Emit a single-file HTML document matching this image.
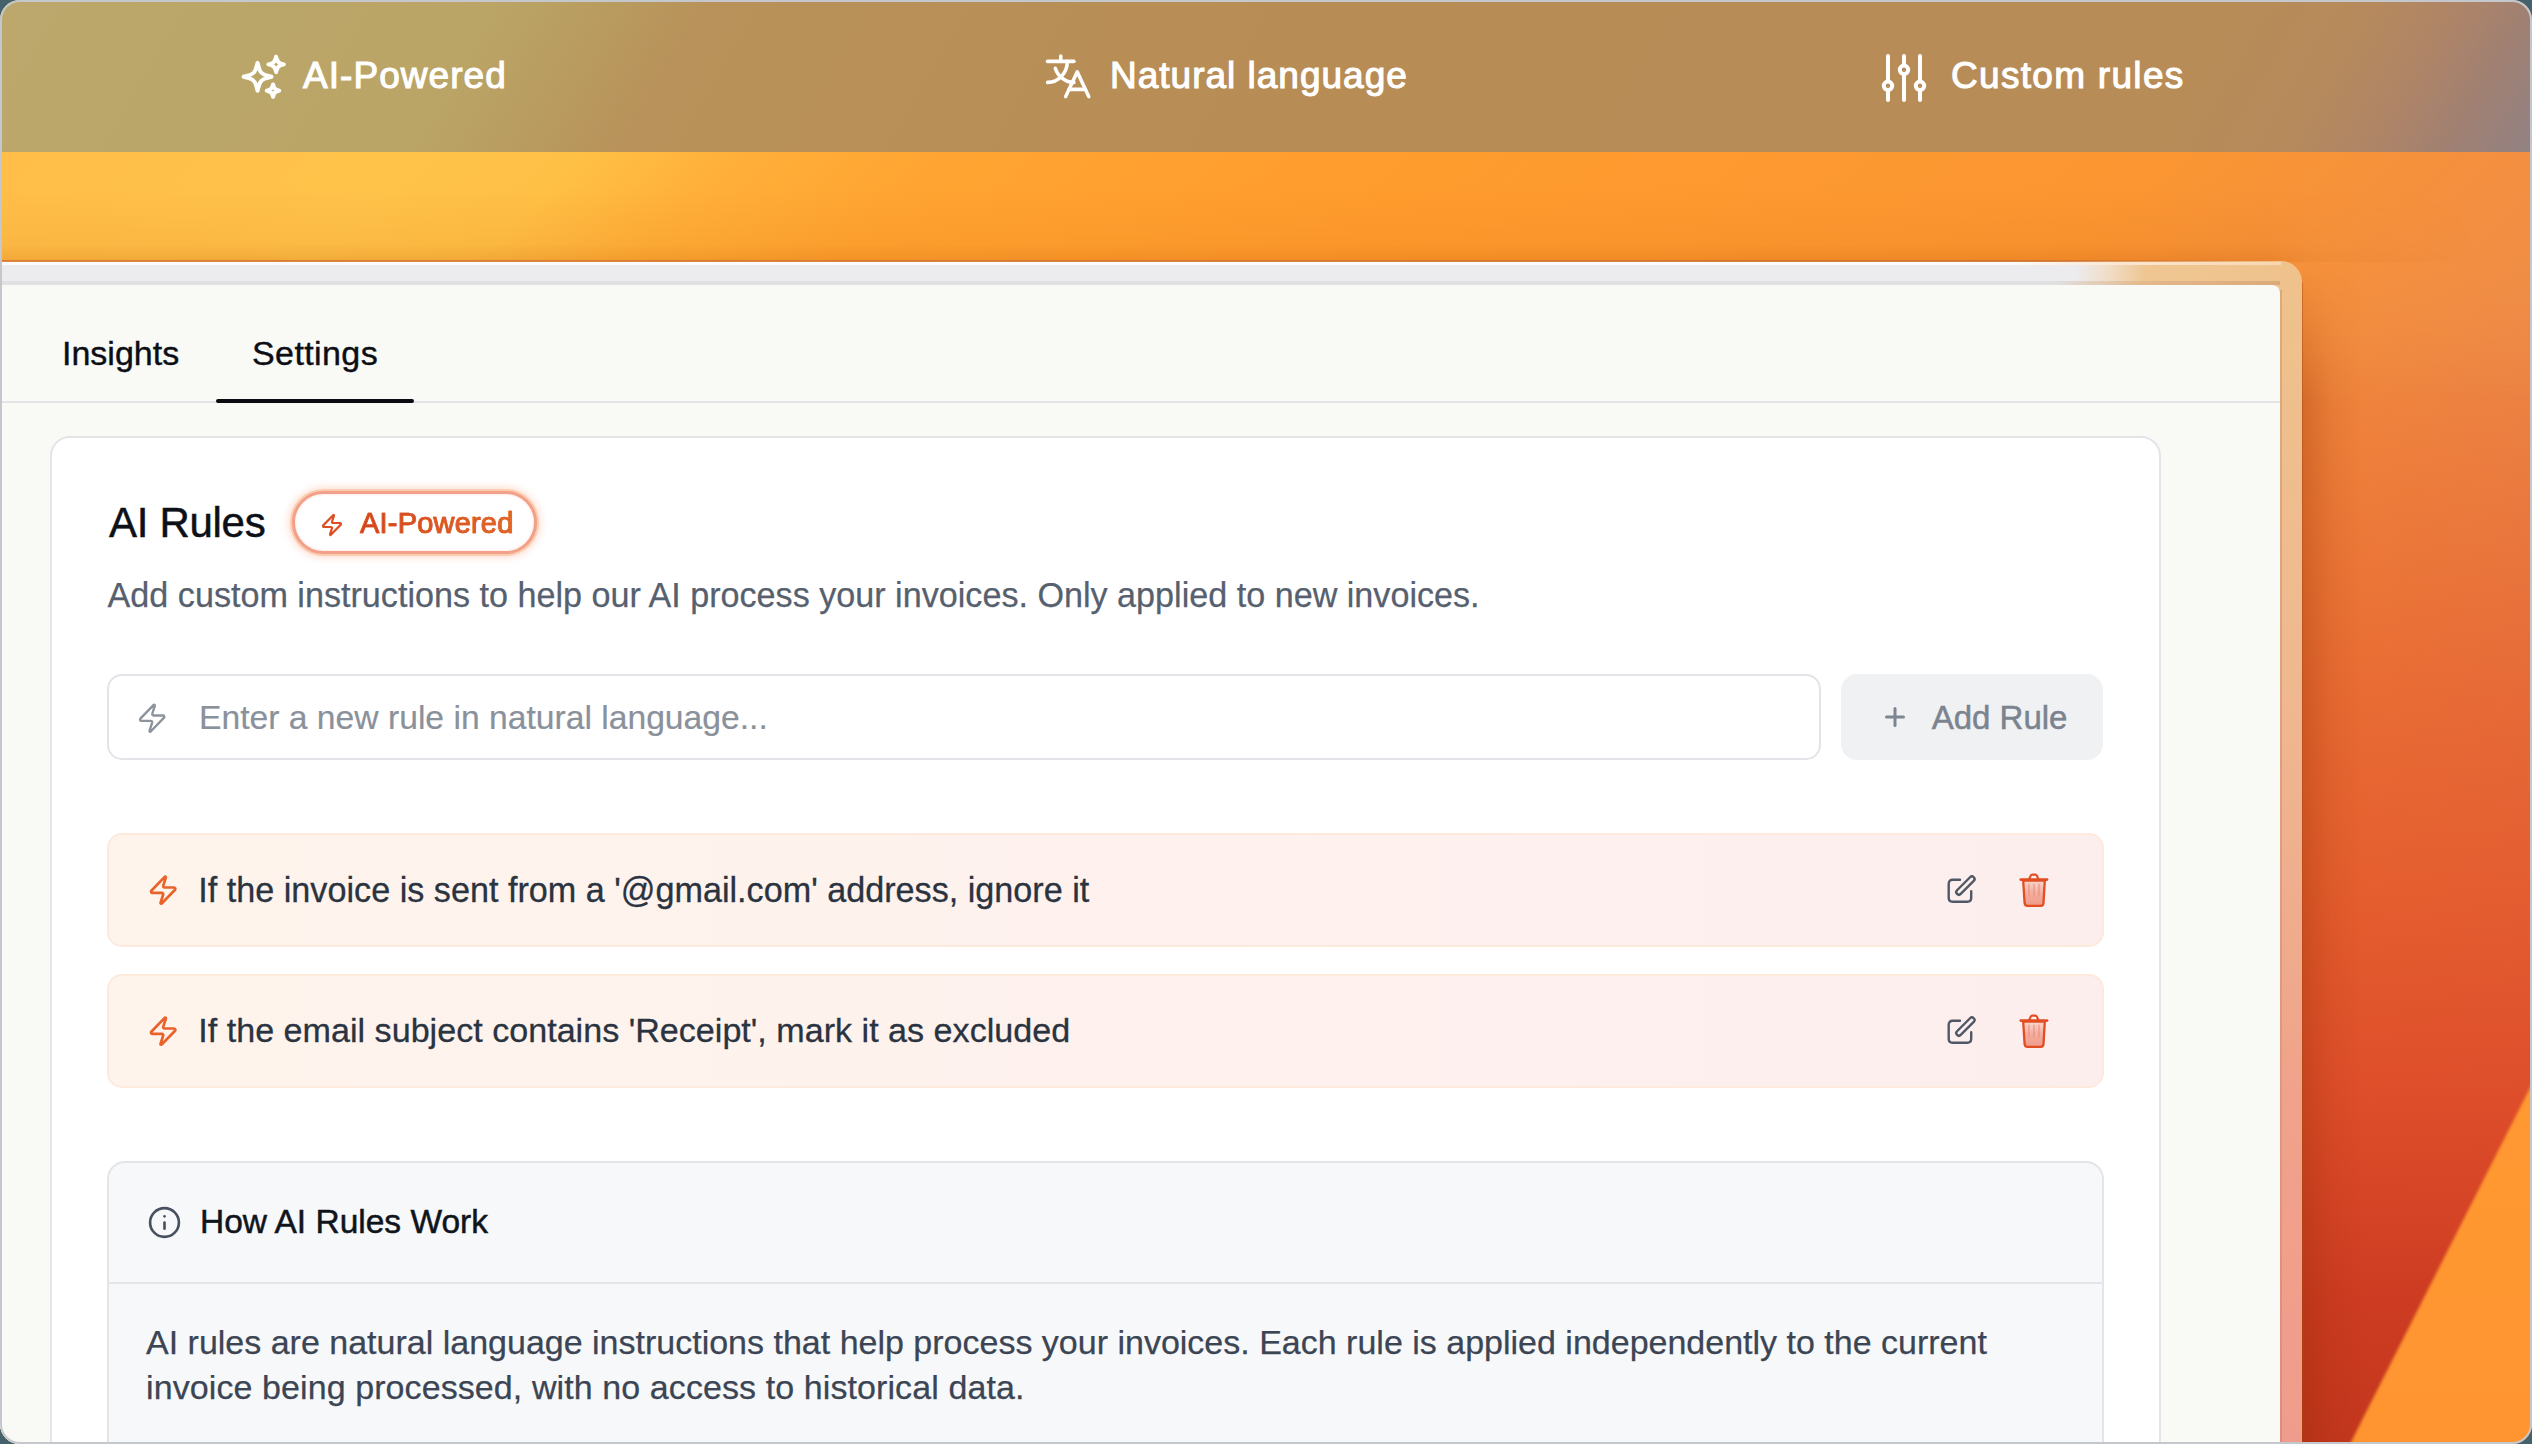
<!DOCTYPE html>
<html>
<head>
<meta charset="utf-8">
<style>
html,body{margin:0;padding:0;width:2532px;height:1444px;overflow:hidden;background:#44626c;}
*{box-sizing:border-box;}
body{font-family:"Liberation Sans",sans-serif;}
.frame{position:absolute;left:0;top:0;width:2532px;height:1444px;}
.inner{position:absolute;left:0;top:0;width:2532px;height:1444px;border-radius:20px;overflow:hidden;background:#f08a3a;}
.bord{position:absolute;left:0;top:0;width:2532px;height:1444px;border-radius:20px;border:2px solid #c4c8cc;pointer-events:none;}
.abs{position:absolute;}
.t{position:absolute;white-space:nowrap;line-height:1;}
svg{position:absolute;overflow:visible;}
</style>
</head>
<body>
<div class="frame">
<div class="inner">
  <!-- orange background -->
  <div class="abs" id="obg" style="left:0;top:152px;width:2532px;height:1292px;background:linear-gradient(180deg,rgba(222,70,38,0) 0px,rgba(222,70,38,0) 110px,rgba(222,70,38,0.27) 348px,rgba(222,70,38,0.49) 548px,rgba(222,70,38,0.68) 748px,rgba(220,72,40,0.92) 948px,rgba(205,60,34,1) 1148px,rgba(195,55,30,1) 1292px),linear-gradient(90deg,#ffc048 0%,#ffc44a 12%,#ffb03a 25%,#ffa032 40%,#ff9a2e 55%,#fa9532 78%,#f4903e 91%,#ee8c48 100%);"></div>
  <div class="abs" id="band" style="left:0;top:152px;width:2532px;height:250px;-webkit-mask-image:linear-gradient(180deg,#000 110px,rgba(0,0,0,0) 250px);background:linear-gradient(135deg,#ffbe48 0%,#ffc34a 15%,#ffc046 21%,#ffb03a 26.5%,#ffa432 34%,#ff9c2e 52%,#fb9632 78%,#f4903e 89.1%,#ee8c48 98%);"></div>
  <div class="abs" style="left:0;top:190px;width:2532px;height:72px;-webkit-mask-image:linear-gradient(90deg,#000 2270px,rgba(0,0,0,0.4) 2310px,rgba(0,0,0,0) 2480px);background:linear-gradient(180deg,rgba(200,90,0,0) 0%,rgba(200,90,0,0.08) 75%,rgba(190,80,0,0.22) 100%);"></div>
  <div class="abs" style="left:2290px;top:152px;width:300px;height:1348px;filter:blur(1.5px);"><div style="position:absolute;left:0;top:0;width:300px;height:1348px;background:linear-gradient(180deg,#ffa434,#ff9a32 60%,#ff9430);clip-path:polygon(300px 817px,300px 1348px,31.7px 1348px);"></div></div>
  <div class="abs" style="left:2302px;top:262px;width:60px;height:1190px;background:linear-gradient(90deg,rgba(140,40,0,0.28),rgba(140,40,0,0.08) 50%,rgba(140,40,0,0));-webkit-mask-image:linear-gradient(180deg,rgba(0,0,0,0),#000 140px);"></div>
  <!-- header band -->
  <div class="abs" id="hdr" style="left:0;top:0;width:2532px;height:152px;background:linear-gradient(120deg,#bca86c 0%,#baa466 19%,#b99c60 23%,#b8925a 27%,#b88c55 51%,#b88c57 85.6%,#b68a5c 90.6%,#ae8468 94.1%,#a08072 96.7%,#928284 100%);"></div>
  <!-- header content -->
  <svg style="left:239.4px;top:51.7px;width:49.5px;height:49.5px" viewBox="0 0 24 24" fill="none" stroke="#fff" stroke-width="1.95" stroke-linecap="round" stroke-linejoin="round"><path d="M9.813 15.904 9 18.75l-.813-2.846a4.5 4.5 0 0 0-3.09-3.09L2.250 12l2.846-.813a4.5 4.5 0 0 0 3.090-3.090L9 5.25l.813 2.846a4.5 4.5 0 0 0 3.090 3.090L15.75 12l-2.846.813a4.5 4.5 0 0 0-3.090 3.090ZM18.259 8.715 18 9.75l-.259-1.035a3.375 3.375 0 0 0-2.455-2.456L14.25 6l1.036-.259a3.375 3.375 0 0 0 2.455-2.456L18 2.25l.259 1.035a3.375 3.375 0 0 0 2.456 2.456L21.75 6l-1.035.259a3.375 3.375 0 0 0-2.456 2.456ZM16.894 20.567 16.5 21.75l-.394-1.183a2.250 2.250 0 0 0-1.423-1.423L13.5 18.75l1.183-.394a2.250 2.250 0 0 0 1.423-1.423l.394-1.183.394 1.183a2.250 2.250 0 0 0 1.423 1.423l1.183.394-1.183.394a2.250 2.250 0 0 0-1.423 1.423Z"/></svg>
  <div class="t hdrt" style="left:303px;top:56.7px;letter-spacing:1.05px;">AI-Powered</div>
  <svg style="left:1041.3px;top:49px;width:52.7px;height:56.3px" viewBox="0 0 256 256" preserveAspectRatio="none" fill="none" stroke="#fff" stroke-width="17" stroke-linecap="round" stroke-linejoin="round"><polyline points="232 216 176 104 120 216"/><line x1="136" y1="184" x2="216" y2="184"/><line x1="96" y1="32" x2="96" y2="56"/><line x1="32" y1="56" x2="160" y2="56"/><path d="M128,56a96,96,0,0,1-96,96"/><path d="M69.47,88A96,96,0,0,0,160,152"/></svg>
  <div class="t hdrt" style="left:1110px;top:56.7px;letter-spacing:1.0px;">Natural language</div>
  <svg style="left:1872px;top:47px;width:64px;height:64px" viewBox="0 0 64 64" fill="none" stroke="#fff" stroke-width="4" stroke-linecap="round"><line x1="16" y1="9" x2="16" y2="34"/><line x1="16" y1="45" x2="16" y2="53"/><circle cx="16" cy="38.8" r="4.2"/><line x1="32" y1="9" x2="32" y2="18"/><line x1="32" y1="29" x2="32" y2="53"/><circle cx="32" cy="22.8" r="4.2"/><line x1="48" y1="9" x2="48" y2="34"/><line x1="48" y1="45" x2="48" y2="53"/><circle cx="48" cy="38.8" r="4.2"/></svg>
  <div class="t hdrt" style="left:1951px;top:56.7px;letter-spacing:1.3px;">Custom rules</div>

  <!-- window frame -->
  <div class="abs" id="wframe" style="left:-40px;top:261px;width:2342px;height:1300px;border-radius:0 21px 0 0;background:linear-gradient(90deg,#ececee 0%,#ececee 90.3%,#f1dcc6 91.8%,#efc692 93.3%,#efc28c 100%);"></div>
  <div class="abs" style="left:0;top:260px;width:2282px;height:2px;background:linear-gradient(90deg,#d8782c,#d07028 90%,rgba(208,112,40,0));opacity:.85"></div>
  <div class="abs" style="left:0;top:262px;width:2281px;height:3px;background:linear-gradient(90deg,#fbfbfb 0%,#fbfbfb 88%,#fde6d0 93%,#f8d6b0 100%);"></div>
  <div class="abs" style="left:0;top:281px;width:2280px;height:4px;background:linear-gradient(90deg,#e1e1e4 0%,#e1e1e4 90%,#e3b88a 94%,#dcaa7a 100%);"></div>
  <div class="abs" style="left:2279px;top:300px;width:23px;height:1150px;background:linear-gradient(180deg,#eec28c 0%,#efb890 35%,#f0a28a 70%,#f09c8c 100%);"></div>
  <div class="abs" style="left:2279px;top:290px;width:3px;height:1160px;background:linear-gradient(180deg,#dcaa7a 0%,#dc9a80 60%,#dc8c80 100%);"></div>
  <div class="abs" style="left:2302px;top:282px;width:1px;height:1170px;background:rgba(170,70,20,0.45);"></div>
  <!-- window content -->
  <div class="abs" id="win" style="left:0;top:285px;width:2280px;height:1200px;background:#f9f9f6;border-radius:0 8px 0 0;"></div>

  <!-- tabs -->
  <div class="t tab" style="left:62px;top:336.4px;">Insights</div>
  <div class="t tab" style="left:252px;top:336.4px;letter-spacing:0.4px;">Settings</div>
  <div class="abs" style="left:0;top:401px;width:2280px;height:2px;background:#e3e4e7;"></div>
  <div class="abs" style="left:216px;top:399px;width:198px;height:4px;background:#0a0a10;border-radius:2px;"></div>

  <!-- card -->
  <div class="abs" id="card" style="left:50px;top:436px;width:2111px;height:1100px;background:#fff;border:2px solid #e4e5e9;border-radius:20px;"></div>

  <div class="t" id="title" style="left:109px;top:502.3px;font-size:42px;color:#0d1117;-webkit-text-stroke:0.5px #0d1117;letter-spacing:-0.3px;">AI Rules</div>
  <!-- badge -->
  <div class="abs" id="badge" style="left:292px;top:491px;width:245px;height:63px;border-radius:32px;border:3px solid #f2a08a;background:#fff;box-shadow:0 0 0 2px rgba(250,196,160,0.75),0 0 7px 4px rgba(248,150,110,0.3),inset 0 0 3px rgba(248,140,100,0.3);"></div>
  <svg style="left:320px;top:513px;width:24px;height:24px" viewBox="0 0 24 24" fill="none" stroke="#dd4f22" stroke-width="2.2" stroke-linecap="round" stroke-linejoin="round"><path d="M4 14a1 1 0 0 1-.78-1.63l9.9-10.2a.5.5 0 0 1 .86.46l-1.92 6.02A1 1 0 0 0 13 10h7a1 1 0 0 1 .78 1.63l-9.9 10.2a.5.5 0 0 1-.86-.46l1.92-6.02A1 1 0 0 0 11 14z"/></svg>
  <div class="t" id="badgetxt" style="left:360px;top:508.6px;font-size:29px;letter-spacing:0.2px;-webkit-text-stroke:0.7px #dd5a24;background:linear-gradient(90deg,#d23e1e,#e46a26);-webkit-background-clip:text;background-clip:text;color:transparent;">AI-Powered</div>

  <div class="t" id="desc" style="left:107.6px;top:578.2px;font-size:34.15px;color:#56606e;-webkit-text-stroke:0.25px #56606e;">Add custom instructions to help our AI process your invoices. Only applied to new invoices.</div>

  <!-- input -->
  <div class="abs" id="input" style="left:107px;top:674px;width:1714px;height:86px;border:2px solid #e2e4e8;border-radius:15px;background:#fff;"></div>
  <svg style="left:136.3px;top:701.6px;width:32.4px;height:32.4px" viewBox="0 0 24 24" fill="none" stroke="#8d939c" stroke-width="1.75" stroke-linecap="round" stroke-linejoin="round"><path d="M4 14a1 1 0 0 1-.78-1.63l9.9-10.2a.5.5 0 0 1 .86.46l-1.92 6.02A1 1 0 0 0 13 10h7a1 1 0 0 1 .78 1.63l-9.9 10.2a.5.5 0 0 1-.86-.46l1.92-6.02A1 1 0 0 0 11 14z"/></svg>
  <div class="t" id="ph" style="left:199px;top:700.7px;font-size:33.66px;color:#8a919b;-webkit-text-stroke:0.2px #8a919b;">Enter a new rule in natural language...</div>
  <!-- button -->
  <div class="abs" id="btn" style="left:1841px;top:674px;width:262px;height:86px;border-radius:16px;background:#f0f1f3;"></div>
  <svg style="left:1883px;top:705px;width:24px;height:24px" viewBox="0 0 24 24" fill="none" stroke="#7d8591" stroke-width="3" stroke-linecap="round"><line x1="12" y1="3.5" x2="12" y2="20.5"/><line x1="3.5" y1="12" x2="20.5" y2="12"/></svg>
  <div class="t" id="btntxt" style="left:1931.7px;top:700.8px;font-size:33px;color:#7b838f;-webkit-text-stroke:0.5px #7b838f;">Add Rule</div>

  <!-- rules -->
  <div class="abs rule" style="top:833px;"></div>
  <svg style="left:147.3px;top:873.6px;width:32.4px;height:32.4px" viewBox="0 0 24 24" fill="none" stroke="#e8622a" stroke-width="2" stroke-linecap="round" stroke-linejoin="round"><path d="M4 14a1 1 0 0 1-.78-1.63l9.9-10.2a.5.5 0 0 1 .86.46l-1.92 6.02A1 1 0 0 0 13 10h7a1 1 0 0 1 .78 1.63l-9.9 10.2a.5.5 0 0 1-.86-.46l1.92-6.02A1 1 0 0 0 11 14z"/></svg>
  <div class="t rtxt" style="top:872.7px;font-size:34.18px;">If the invoice is sent from a '@gmail.com' address, ignore it</div>
  <svg style="left:1940px;top:865px;width:50px;height:50px" viewBox="0 0 50 50" fill="none" stroke="#4f5866" stroke-width="2.4" stroke-linecap="round" stroke-linejoin="round"><path d="M20 14.8 H12.7 Q8.7 14.8 8.7 18.8 V32.7 Q8.7 36.7 12.7 36.7 H27.2 Q31.2 36.7 31.2 32.7 V26.2"/><rect x="13.6" y="18" width="23.6" height="5.2" rx="2.6" transform="rotate(-45 25.4 20.6)"/></svg>
  <svg style="left:2010px;top:865px;width:50px;height:50px" viewBox="0 0 50 50" fill="none" stroke-linecap="round" stroke-linejoin="round"><defs><linearGradient id="tg865" x1="0" y1="0" x2="0" y2="1"><stop offset="0" stop-color="#fbd8cf"/><stop offset="0.45" stop-color="#f4b0a2"/><stop offset="1" stop-color="#f09a88"/></linearGradient></defs><path d="M13.2 15.5 L14.6 38.2 Q14.9 40.8 17.4 40.8 L30.8 40.8 Q33.3 40.8 33.5 38.2 L34.8 15.5 Z" fill="url(#tg865)" stroke="#e24d22" stroke-width="2.3"/><line x1="19" y1="19" x2="19" y2="31" stroke="#e8907e" stroke-width="1.1"/><line x1="24" y1="19" x2="24" y2="31" stroke="#e8907e" stroke-width="1.1"/><line x1="29" y1="19" x2="29" y2="31" stroke="#e8907e" stroke-width="1.1"/><line x1="10.8" y1="14.6" x2="37" y2="14.6" stroke="#e24d22" stroke-width="2.8"/><path d="M19.2 14 L20.7 10.6 Q21.2 9.6 22.3 9.6 L25.3 9.6 Q26.4 9.6 26.9 10.6 L28.4 14" stroke="#e24d22" stroke-width="2.1"/></svg>

  <div class="abs rule" style="top:974px;"></div>
  <svg style="left:147.3px;top:1014.6px;width:32.4px;height:32.4px" viewBox="0 0 24 24" fill="none" stroke="#e8622a" stroke-width="2" stroke-linecap="round" stroke-linejoin="round"><path d="M4 14a1 1 0 0 1-.78-1.63l9.9-10.2a.5.5 0 0 1 .86.46l-1.92 6.02A1 1 0 0 0 13 10h7a1 1 0 0 1 .78 1.63l-9.9 10.2a.5.5 0 0 1-.86-.46l1.92-6.02A1 1 0 0 0 11 14z"/></svg>
  <div class="t rtxt" style="top:1013.2px;font-size:34.12px;">If the email subject contains 'Receipt', mark it as excluded</div>
  <svg style="left:1940px;top:1006px;width:50px;height:50px" viewBox="0 0 50 50" fill="none" stroke="#4f5866" stroke-width="2.4" stroke-linecap="round" stroke-linejoin="round"><path d="M20 14.8 H12.7 Q8.7 14.8 8.7 18.8 V32.7 Q8.7 36.7 12.7 36.7 H27.2 Q31.2 36.7 31.2 32.7 V26.2"/><rect x="13.6" y="18" width="23.6" height="5.2" rx="2.6" transform="rotate(-45 25.4 20.6)"/></svg>
  <svg style="left:2010px;top:1006px;width:50px;height:50px" viewBox="0 0 50 50" fill="none" stroke-linecap="round" stroke-linejoin="round"><defs><linearGradient id="tg1006" x1="0" y1="0" x2="0" y2="1"><stop offset="0" stop-color="#fbd8cf"/><stop offset="0.45" stop-color="#f4b0a2"/><stop offset="1" stop-color="#f09a88"/></linearGradient></defs><path d="M13.2 15.5 L14.6 38.2 Q14.9 40.8 17.4 40.8 L30.8 40.8 Q33.3 40.8 33.5 38.2 L34.8 15.5 Z" fill="url(#tg1006)" stroke="#e24d22" stroke-width="2.3"/><line x1="19" y1="19" x2="19" y2="31" stroke="#e8907e" stroke-width="1.1"/><line x1="24" y1="19" x2="24" y2="31" stroke="#e8907e" stroke-width="1.1"/><line x1="29" y1="19" x2="29" y2="31" stroke="#e8907e" stroke-width="1.1"/><line x1="10.8" y1="14.6" x2="37" y2="14.6" stroke="#e24d22" stroke-width="2.8"/><path d="M19.2 14 L20.7 10.6 Q21.2 9.6 22.3 9.6 L25.3 9.6 Q26.4 9.6 26.9 10.6 L28.4 14" stroke="#e24d22" stroke-width="2.1"/></svg>

  <!-- how box -->
  <div class="abs" id="how" style="left:107px;top:1161px;width:1997px;height:400px;background:#f7f8fa;border:2px solid #e3e5e9;border-radius:18px;"></div>
  <div class="abs" style="left:109px;top:1282px;width:1993px;height:2px;background:#e3e5e9;"></div>
  <svg style="left:146px;top:1204px;width:37px;height:37px" viewBox="0 0 24 24" fill="none" stroke="#485060" stroke-width="1.7" stroke-linecap="round" stroke-linejoin="round"><circle cx="12" cy="12" r="9.35"/><path d="M12 16v-4"/><path d="M12 8h.01"/></svg>
  <div class="t" id="howt" style="left:200px;top:1205.4px;font-size:33.5px;color:#10151c;-webkit-text-stroke:0.5px #10151c;">How AI Rules Work</div>
  <div class="t bodyt" style="left:146px;top:1324.8px;">AI rules are natural language instructions that help process your invoices. Each rule is applied independently to the current</div>
  <div class="t bodyt" style="left:146px;top:1369.8px;letter-spacing:0.09px;">invoice being processed, with no access to historical data.</div>
</div>
<div class="bord"></div>
</div>
<style>
.hdrt{font-size:37px;letter-spacing:0.85px;color:#fff;-webkit-text-stroke:1.1px #fff;}
.tab{font-size:34px;color:#0b0e14;-webkit-text-stroke:0.4px #0b0e14;}
.rule{left:107px;width:1997px;height:114px;border-radius:15px;border:2px solid #fdeadc;background:linear-gradient(90deg,#fff4ec 0%,#fef1ee 60%,#fdeeee 100%);}
.rtxt{left:198.3px;color:#2a3340;-webkit-text-stroke:0.3px #2a3340;}
.bodyt{font-size:34px;color:#3c4553;-webkit-text-stroke:0.25px #3c4553;}
</style>
</body>
</html>
